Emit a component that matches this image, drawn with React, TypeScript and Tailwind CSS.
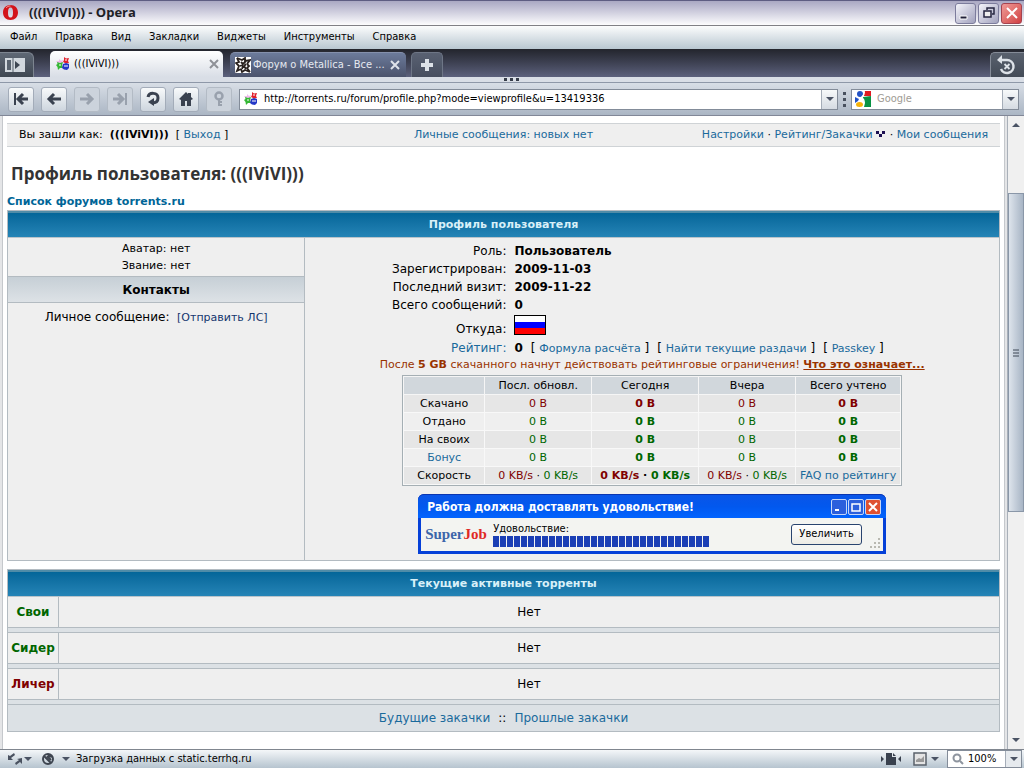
import type { ReactNode } from 'react'

const MENU = ['Файл', 'Правка', 'Вид', 'Закладки', 'Виджеты', 'Инструменты', 'Справка']

const PROFILE_ROWS = [
  { label: 'Роль:', value: 'Пользователь' },
  { label: 'Зарегистрирован:', value: '2009-11-03' },
  { label: 'Последний визит:', value: '2009-11-22' },
  { label: 'Всего сообщений:', value: '0' },
]

const STATS = [
  { label: 'Скачано', color: 'text-[#800000]' },
  { label: 'Отдано', color: 'text-[#006600]' },
  { label: 'На своих', color: 'text-[#006600]' },
  { label: 'Бонус', color: 'text-[#006600]', link: true },
]

const TORRENTS = [
  { label: 'Свои', color: 'text-[#006600]' },
  { label: 'Сидер', color: 'text-[#006600]' },
  { label: 'Личер', color: 'text-[#800000]' },
]

function Link({ children, className = 'text-[#1a6a9c]' }: { children: ReactNode; className?: string }) {
  return (
    <a href="#" className={className}>
      {children}
    </a>
  )
}

function ForumIcon() {
  return (
    <svg className="h-3.5 w-3.5 shrink-0" viewBox="0 0 14 14">
      <path d="M3 2l2 2 2-1-1 3 1 2-3-1-3 2 1-3-2-2 3-0z" fill="#f0b8ec" />
      <path d="M8 0l2 1.500L13 1l-1 3 1 2-3 .5L7 5l1-2z" fill="#e0202c" />
      <path d="M1 5l3 1 3-1-1 3 1 3-3 0-2 2-.5-3L0 8l1.500-1z" fill="#35b835" />
      <path d="M7 7l3-1 3 1v4l-2 2-3-.5L6 11z" fill="#2438c8" />
      <path d="M8 9h4M9 3h2M3 8h2" stroke="#fff" strokeWidth="1" />
    </svg>
  )
}

function MetallicaIcon() {
  return (
    <svg className="h-4 w-4 shrink-0" viewBox="0 0 16 16">
      <path d="M0 0h16v16H0z" fill="#fff" />
      <g fill="none" stroke="#29221f" strokeWidth="1.800" strokeLinejoin="miter">
        <path d="M2 1l2 4-3 1 3 3-2 5 4-2" />
        <path d="M2 1l5 2 3-2v3l5-1-3 4" />
        <path d="M15 15l-3-4 2-2-2-2M15 15l-5-2-3 2-1-3" />
        <path d="M6 5l2 2 3-3M11 7l-2 2 2 3M5 9l3-1M7 12l1-3" />
      </g>
    </svg>
  )
}

function GoogleIcon() {
  return (
    <svg className="h-4 w-4 shrink-0" viewBox="0 0 16 16">
      <path d="M0 0h16v16H0z" fill="#fff" />
      <path d="M9 0h7v5H9z" fill="#e01b22" />
      <path d="M8 6l8-1v11H9l1-4-2-3z" fill="#089243" />
      <path d="M0 6l4 2-1 2-3 2z" fill="#2352c5" />
      <ellipse cx="5" cy="3" rx="3" ry="3" fill="#2352c5" />
      <ellipse cx="4.500" cy="13.500" rx="3.500" ry="2.500" fill="#f6b30a" />
      <path d="M9 0c1 3-1 5-2 6s3 2 2 6" stroke="#fff" strokeWidth="1.500" fill="none" />
    </svg>
  )
}

function Caret({ up = false }: { up?: boolean }) {
  return (
    <svg className="h-1 w-2 shrink-0" viewBox="0 0 8 4">
      <path d={up ? 'M0 4l4-4 4 4z' : 'M0 0h8L4 4z'} fill="#4a5364" />
    </svg>
  )
}

function WindowButton({ label, close = false, children }: { label: string; close?: boolean; children: ReactNode }) {
  return (
    <button
      aria-label={label}
      className={`flex h-[21px] w-[21px] items-center justify-center rounded-[3px] border ${
        close
          ? 'border-[#a5434f] bg-gradient-to-br from-[#ee9a98] to-[#d03d42]'
          : 'border-[#7c7c9c] bg-gradient-to-br from-[#f4f4fa] to-[#a2a2bd]'
      }`}
    >
      <svg className="h-4 w-4" viewBox="0 0 16 16" fill="none">
        {children}
      </svg>
    </button>
  )
}

function TitleBar() {
  return (
    <header className="flex h-[26px] items-center border-t border-b border-t-[#5e5d82] border-b-[#808085] bg-gradient-to-b from-[#aaa8c3] to-[#fdfdfe] pr-0.5 pl-[3px]">
      <svg className="h-4 w-4" viewBox="0 0 16 16">
        <path d="M7.500 0C3 0 0 3 0 7.500S3 15 7.500 15 15 12 15 7.500 12 0 7.500 0zm0 2.500c2 0 2.500 2 2.500 5s-.5 5-2.500 5S5 10.500 5 7.500s.5-5 2.500-5z" fill="#d3131b" />
        <path d="M3 3c1-1.500 3-2 4.500-2" stroke="#f59090" strokeWidth="1" fill="none" />
      </svg>
      <h1 className="ml-2.5 flex-1 font-['Open_Sans',sans-serif] text-[13px] font-bold text-[#202025]">(((IViVI))) - Opera</h1>
      <div className="flex gap-0.5">
        <WindowButton label="Свернуть">
          <path d="M2 11h7v3H2z" fill="#202038" stroke="#fff" />
        </WindowButton>
        <WindowButton label="Восстановить">
          <path d="M6 5V3h7v6h-2" stroke="#25253f" strokeWidth="1.500" />
          <path d="M3 6h7v6H3z" stroke="#25253f" strokeWidth="1.500" fill="#eee" />
        </WindowButton>
        <WindowButton label="Закрыть" close>
          <path d="M3 3l10 10M13 3L3 13" stroke="#fff" strokeWidth="2" />
        </WindowButton>
      </div>
    </header>
  )
}

function MenuBar() {
  return (
    <nav className="flex h-[23px] items-center gap-[18px] bg-gradient-to-b from-[#fcfdfd] to-[#b9c7d1] pl-2.5">
      {MENU.map((item) => (
        <button key={item}>{item}</button>
      ))}
    </nav>
  )
}

function TabBar() {
  return (
    <div className="flex h-7 items-end bg-gradient-to-b from-[#23252d] to-[#5c617d]">
      <button
        aria-label="Панели"
        className="flex h-[25px] w-[34px] items-center rounded-tr-md border-t border-r border-[#7d8590] bg-gradient-to-b from-[#5f6875] to-[#3f4752] pl-[5px]"
      >
        <svg className="h-4 w-5" viewBox="0 0 20 16">
          <path d="M0 1h20v14H0z" fill="#d2d8de" />
          <path d="M2 3h4v10H2z" fill="#59636f" />
          <path d="M8 1v14" stroke="#59636f" />
          <path d="M10 4l5 4-5 4z" fill="#3d4652" />
        </svg>
      </button>
      <div className="ml-4 flex h-[26px] w-[173px] items-center rounded-t-[5px] bg-gradient-to-b from-white to-[#d9dee6] pr-1 pl-1.5">
        <ForumIcon />
        <span className="ml-1 flex-1">(((IViVI)))</span>
        <button aria-label="Закрыть вкладку">
          <svg className="h-2.5 w-2.5" viewBox="0 0 10 10">
            <path d="M1 1l8 8M9 1L1 9" stroke="#8f9197" strokeWidth="2" />
          </svg>
        </button>
      </div>
      <div className="ml-[7px] flex h-[25px] w-[176px] items-center rounded-t-[5px] border-t border-[#8490ac] bg-gradient-to-b from-[#6c7b9b] to-[#4b536c] pr-1.5 pl-[5px] text-[#e6e9f0]">
        <MetallicaIcon />
        <span className="ml-0.5 flex-1 whitespace-nowrap">Форум о Metallica - Все ...</span>
        <button aria-label="Закрыть вкладку">
          <svg className="h-2.5 w-2.5" viewBox="0 0 10 10">
            <path d="M1 1l8 8M9 1L1 9" stroke="#dfe3ea" strokeWidth="2" />
          </svg>
        </button>
      </div>
      <button
        aria-label="Новая вкладка"
        className="ml-[5px] flex h-[25px] w-8 items-center justify-center rounded-t-[5px] border border-b-0 border-[#6e7686] bg-gradient-to-b from-[#596172] to-[#474e5f]"
      >
        <svg className="h-3 w-3" viewBox="0 0 12 12">
          <path d="M4 0h4v4h4v4H8v4H4V8H0V4h4z" fill="#dde2e8" />
        </svg>
      </button>
      <button
        aria-label="Закрытые вкладки"
        className="ml-auto flex h-[25px] w-[34px] items-center rounded-tl-[5px] border-t border-l border-[#858c98] bg-gradient-to-b from-[#59616e] to-[#434b57] pl-1.5"
      >
        <svg className="h-5 w-5" viewBox="0 0 20 20" fill="none">
          <path d="M4 5h6a6.500 6.500 0 1 1-6 9" stroke="#dde2e8" strokeWidth="2.500" />
          <path d="M0 5l5-5v9z" fill="#dde2e8" />
          <path d="M7.500 9l5 5M12.500 9l-5 5" stroke="#dde2e8" strokeWidth="1.800" />
        </svg>
      </button>
    </div>
  )
}

function ToolButton({ label, disabled = false, children }: { label: string; disabled?: boolean; children: ReactNode }) {
  return (
    <button
      aria-label={label}
      disabled={disabled}
      className={`flex h-[25px] w-[26px] items-center justify-center rounded-[3px] border ${
        disabled
          ? 'border-[#b3bbc5] bg-[#ccd3dc] text-[#99a1ad]'
          : 'border-[#a3acb9] bg-gradient-to-b from-[#f8fafb] to-[#cdd5de] text-[#3a4250]'
      }`}
    >
      <svg className="h-4 w-4" viewBox="0 0 16 16" fill="none" stroke="currentColor" strokeWidth="3">
        {children}
      </svg>
    </button>
  )
}

function Toolbar() {
  return (
    <div className="flex h-[34px] items-center border-t border-b border-t-[#8e98a8] border-b-[#818797] bg-gradient-to-b from-[#d8dee6] to-[#abb6c4] pr-[5px] pl-2">
      <div className="flex gap-[7px]">
        <ToolButton label="В начало">
          <path d="M2 2v12" strokeWidth="2" />
          <path d="M15 8H6M10 3L5 8l5 5" />
        </ToolButton>
        <ToolButton label="Назад">
          <path d="M15 8H3M8 3L3 8l5 5" />
        </ToolButton>
        <ToolButton label="Вперёд" disabled>
          <path d="M1 8h12M8 3l5 5-5 5" />
        </ToolButton>
        <ToolButton label="В конец" disabled>
          <path d="M14 2v12" strokeWidth="2" />
          <path d="M1 8h9M6 3l5 5-5 5" />
        </ToolButton>
        <ToolButton label="Обновить">
          <path d="M3 6c1-5 10-5 10 1 0 4-3 5-6 5" />
          <path d="M3 11l6-4v8z" fill="currentColor" stroke="none" />
        </ToolButton>
        <ToolButton label="Домой">
          <path d="M1 8l7-7 2 2V2h3v4l2 2-2 1v6H9v-5H7v5H3V9z" fill="currentColor" stroke="none" />
        </ToolButton>
        <ToolButton label="Пароли" disabled>
          <circle cx="8" cy="5" r="3.500" strokeWidth="2.500" />
          <path d="M8 8v7M8 11h3M8 14h3" strokeWidth="2" />
        </ToolButton>
      </div>
      <div className="ml-[7px] flex h-[21px] flex-1 items-center border border-[#838c99] bg-white pl-1">
        <ForumIcon />
        <input
          aria-label="Адрес"
          defaultValue="http://torrents.ru/forum/profile.php?mode=viewprofile&u=13419336"
          className="ml-1.5 min-w-0 flex-1 outline-none"
        />
        <button aria-label="История адресов" className="flex h-full w-4 items-center justify-center border-l border-[#a5adb8] bg-gradient-to-b from-[#f7f9fa] to-[#d5dbe2]">
          <Caret />
        </button>
      </div>
      <svg className="mx-1 h-4 w-[5px]" viewBox="0 0 5 16" fill="#48505e">
        <path d="M1 1h3v3H1zM1 7h3v3H1zM1 13h3v3H1z" />
      </svg>
      <div className="flex h-[21px] w-[168px] items-center border border-[#838c99] bg-white pl-[3px]">
        <GoogleIcon />
        <input aria-label="Поиск" placeholder="Google" className="ml-1.5 min-w-0 flex-1 outline-none placeholder:text-[#a09b94]" />
        <button aria-label="Поисковые системы" className="flex h-full w-4 items-center justify-center border-l border-[#a5adb8] bg-gradient-to-b from-[#f7f9fa] to-[#d5dbe2]">
          <Caret />
        </button>
      </div>
    </div>
  )
}

function TableHead({ children }: { children: ReactNode }) {
  return (
    <h3 className="flex h-[27px] items-center justify-center border-t-2 border-b border-t-[#4f8ca8] border-b-[#b9c4cb] bg-gradient-to-b from-[#036699] to-[#2484b6] text-[11px] font-bold text-[#d8f0f8]">
      {children}
    </h3>
  )
}

function StatsTable() {
  return (
    <div className="w-[500px] border border-[#a5afb4]">
      <table className="w-full table-fixed border-collapse text-center text-[11px] leading-[17px]">
        <colgroup>
          <col className="w-[81px]" />
          <col className="w-[107px]" />
          <col className="w-[107px]" />
          <col className="w-[97px]" />
          <col />
        </colgroup>
        <thead>
          <tr className="bg-[#d1d7dc]">
            <td className="border border-[#f5f5f5]" />
            {['Посл. обновл.', 'Сегодня', 'Вчера', 'Всего учтено'].map((h) => (
              <th key={h} className="border border-[#f5f5f5] font-normal">
                {h}
              </th>
            ))}
          </tr>
        </thead>
        <tbody>
          {STATS.map((row, i) => (
            <tr key={row.label} className={i % 2 ? 'bg-[#efefef]' : 'bg-[#e6e6e6]'}>
              <td className="border border-[#f8f8f8]">{row.link ? <Link>{row.label}</Link> : row.label}</td>
              <td className={`border border-[#f8f8f8] ${row.color}`}>0 B</td>
              <td className={`border border-[#f8f8f8] font-bold ${row.color}`}>0 B</td>
              <td className={`border border-[#f8f8f8] ${row.color}`}>0 B</td>
              <td className={`border border-[#f8f8f8] font-bold ${row.color}`}>0 B</td>
            </tr>
          ))}
          <tr className="bg-[#e6e6e6] whitespace-nowrap">
            <td className="border border-[#f8f8f8]">Скорость</td>
            {['', 'font-bold', ''].map((weight, i) => (
              <td key={i} className={`border border-[#f8f8f8] ${weight}`}>
                <span className="text-[#800000]">0 KB/s</span> · <span className="text-[#006600]">0 KB/s</span>
              </td>
            ))}
            <td className="border border-[#f8f8f8]">
              <Link>FAQ по рейтингу</Link>
            </td>
          </tr>
        </tbody>
      </table>
    </div>
  )
}

function BannerButton({ label, color, children }: { label: string; color: string; children: ReactNode }) {
  return (
    <button aria-label={label} className={`flex h-4 w-4 items-center justify-center rounded-[2px] border border-[#c5d6f8] ${color}`}>
      <svg className="h-3 w-3" viewBox="0 0 12 12" fill="none" stroke="#fff" strokeWidth="2">
        {children}
      </svg>
    </button>
  )
}

function Banner() {
  return (
    <div className="w-[468px] rounded-t-md bg-[#0540d8] px-[3px] pb-[3px] font-['DejaVu_Sans_Condensed','DejaVu_Sans',sans-serif] text-[11px]">
      <div className="-mx-[3px] flex h-6 items-center gap-px rounded-t-md border-t border-[#0a35b0] bg-gradient-to-b from-[#0a55e8] via-[#0258ee] to-[#0264ff] pr-[5px] pl-[9px]">
        <span className="flex-1 text-[12px] font-bold text-white">Работа должна доставлять удовольствие!</span>
        <BannerButton label="Свернуть" color="bg-[#2b5fdc]">
          <path d="M2 9h4" />
        </BannerButton>
        <BannerButton label="Развернуть" color="bg-[#2b5fdc]">
          <path d="M2 3h8v7H2z" strokeWidth="1.500" />
        </BannerButton>
        <BannerButton label="Закрыть" color="bg-[#df5030]">
          <path d="M2 2l8 8M10 2l-8 8" />
        </BannerButton>
      </div>
      <div className="flex h-[33px] items-center bg-[#f3f4f1] pl-1">
        <span className="w-[68px] font-['Liberation_Serif',serif] text-[15px] font-bold text-[#3c66aa]">
          Super<span className="text-[#df2a24]">Job</span>
        </span>
        <div className="flex-1">
          <div className="leading-[14px]">Удовольствие:</div>
          <div role="progressbar" aria-label="Удовольствие" className="flex h-[11px] gap-px">
            {Array.from({ length: 31 }, (_, i) => (
              <span key={i} className="w-1.5 bg-[#1b3fb5]" />
            ))}
          </div>
        </div>
        <button className="h-[21px] w-[71px] rounded-[3px] border border-[#29446f] bg-gradient-to-b from-white to-[#ecebe5]">Увеличить</button>
        <svg className="mr-px mb-px ml-2 h-3 w-3 self-end" viewBox="0 0 12 12" fill="#b9b9b1">
          <path d="M8 0h2v2H8zM4 4h2v2H4zM8 4h2v2H8zM0 8h2v2H0zM4 8h2v2H4zM8 8h2v2H8z" />
        </svg>
      </div>
    </div>
  )
}

function Profile() {
  return (
    <section className="border border-[#b3bbc1] bg-[#efefef]">
      <TableHead>Профиль пользователя</TableHead>
      <div className="flex h-[322px]">
        <aside className="w-[30%] border-r border-[#b3bbc1] text-center">
          <div className="py-0.5 text-[11px] leading-[17px]">
            <div>Аватар: нет</div>
            <div>Звание: нет</div>
          </div>
          <h4 className="flex h-[27px] items-center justify-center border-t border-b border-[#b3bbc1] bg-gradient-to-b from-[#c6cfd6] to-[#dde2e6] text-[12px] font-bold">
            Контакты
          </h4>
          <div className="mt-[5px] leading-[18px]">
            Личное сообщение:&nbsp; <Link className="text-[11px] text-[#14366e]">[Отправить ЛС]</Link>
          </div>
        </aside>
        <div className="flex flex-1 flex-col items-center pt-1">
          <dl className="grid w-full grid-cols-[29%_1fr] gap-x-2 leading-[18px] whitespace-nowrap">
            {PROFILE_ROWS.map((row) => (
              <div key={row.label} className="contents">
                <dt className="text-right">{row.label}</dt>
                <dd className="font-bold">{row.value}</dd>
              </div>
            ))}
            <dt className="flex items-end justify-end pb-px">Откуда:</dt>
            <dd className="h-[25px] pt-px">
              <svg className="h-5 w-8" viewBox="0 0 32 20" role="img" aria-label="Россия">
                <path d="M0 0h32v20H0z" fill="#000" />
                <path d="M1 1h30v6H1z" fill="#fff" />
                <path d="M1 7h30v6H1z" fill="#00f" />
                <path d="M1 13h30v6H1z" fill="#f00" />
              </svg>
            </dd>
            <dt className="text-right">
              <Link>Рейтинг:</Link>
            </dt>
            <dd className="flex gap-2">
              <b>0</b>
              <span>
                [ <Link className="text-[11px] text-[#1a6a9c]">Формула расчёта</Link> ]
              </span>
              <span>
                [ <Link className="text-[11px] text-[#1a6a9c]">Найти текущие раздачи</Link> ]
              </span>
              <span>
                [ <Link className="text-[11px] text-[#1a6a9c]">Passkey</Link> ]
              </span>
            </dd>
          </dl>
          <p className="mb-[3px] text-[11px] leading-[14px] whitespace-nowrap text-[#993300]">
            После <b>5 GB</b> скачанного начнут действовать рейтинговые ограничения!{' '}
            <Link className="font-bold underline">Что это означает...</Link>
          </p>
          <StatsTable />
          <div className="mt-2">
            <Banner />
          </div>
        </div>
      </div>
    </section>
  )
}

function ActiveTorrents() {
  return (
    <section className="mt-2 border border-[#b3bbc1] bg-[#dce1e5]">
      <TableHead>Текущие активные торренты</TableHead>
      {TORRENTS.map((row, i) => (
        <div
          key={row.label}
          className={`mb-1 flex items-stretch border-b border-[#b3bbc1] bg-[#efefef] ${i === 0 ? 'h-[31px]' : 'h-8 border-t'}`}
        >
          <b className={`flex w-[51px] items-center justify-center border-r border-[#b3bbc1] ${row.color}`}>{row.label}</b>
          <span className="flex flex-1 items-center justify-center">Нет</span>
        </div>
      ))}
      <div className="flex h-[27px] items-center justify-center gap-2 border-t border-[#b3bbc1]">
        <Link>Будущие закачки</Link>
        <span>::</span>
        <Link>Прошлые закачки</Link>
      </div>
    </section>
  )
}

function Page() {
  return (
    <main className="min-w-0 flex-1 border-r border-l border-[#c5c8cc] bg-white px-1 pt-[7px] font-['DejaVu_Sans',sans-serif] text-[12px] text-black">
      <div className="grid h-6 grid-cols-[1fr_auto_1fr] items-center border-t border-b border-[#cfd3d6] bg-[#efefef] px-3 text-[11px] whitespace-nowrap">
        <div>
          Вы зашли как:&nbsp; <b>(((IViVI)))</b>&nbsp; [ <Link>Выход</Link> ]
        </div>
        <Link>Личные сообщения: новых нет</Link>
        <div className="text-right">
          <Link>Настройки</Link> · <Link>Рейтинг/Закачки</Link>{' '}
          <svg className="inline h-2 w-2.5" viewBox="0 0 10 8" fill="#1c0f52">
            <path d="M0 0h3v3H0zM6 0h3v3H6zM3 3h3v3H3z" />
          </svg>{' '}
          · <Link>Мои сообщения</Link>
        </div>
      </div>
      <h2 className="mt-[15px] ml-1 font-['Open_Sans',sans-serif] text-[17px] leading-6 font-bold text-[#333]">
        Профиль пользователя: (((IViVI)))
      </h2>
      <div className="mt-2 text-[11px] leading-4 font-bold">
        <Link className="text-[#006597]">Список форумов torrents.ru</Link>
      </div>
      <Profile />
      <ActiveTorrents />
    </main>
  )
}

function Scrollbar() {
  return (
    <div className="flex w-[17px] flex-col items-center border-l border-[#a9b0b9] bg-[#f0f0f0]">
      <button aria-label="Вверх" className="flex h-[18px] items-center">
        <Caret up />
      </button>
      <div className="mt-[59px] flex h-[319px] w-full items-center justify-center border border-[#8a97a8] bg-gradient-to-r from-[#dde4ec] to-[#a8b5c5]">
        <svg className="h-2 w-2" viewBox="0 0 8 8" stroke="#3f4856">
          <path d="M1 1h6M1 4h6M1 7h6" />
        </svg>
      </div>
      <button aria-label="Вниз" className="mt-auto flex h-[18px] items-center">
        <Caret />
      </button>
    </div>
  )
}

function StatusBar() {
  return (
    <footer className="flex h-[19px] items-center border-t border-[#80868f] bg-gradient-to-b from-[#f4f7f9] to-[#b6c4cf] pr-0.5 pl-2">
      <svg className="h-3 w-3.5" viewBox="0 0 14 12" fill="#4a5260">
        <path d="M0 7V2l2 1 4-3 1 2-4 3 2 2zM14 5v6l-2-2-4 3-1-2 4-3-2-1z" />
      </svg>
      <span className="ml-0.5 flex">
        <Caret />
      </span>
      <svg className="ml-2.5 h-3 w-3" viewBox="0 0 12 12">
        <circle cx="6" cy="6" r="5" fill="none" stroke="#3e4550" strokeWidth="2" />
        <path d="M2 3l7 7M5 3l4 4M6 2l4 2" stroke="#3e4550" strokeWidth="2" />
      </svg>
      <span className="ml-2 flex">
        <Caret />
      </span>
      <span className="ml-1.5 flex-1">Загрузка данных с static.terrhq.ru</span>
      <svg className="h-3 w-5" viewBox="0 0 20 12" fill="#39414e">
        <path d="M0 3l3 3-3 3zM20 3l-3 3 3 3zM5 0h6v4h4v8H5zM12 0l3 3h-3z" />
      </svg>
      <svg className="mr-1 ml-3 h-3.5 w-3.5" viewBox="0 0 14 14">
        <path d="M1 1h12v12H1z" fill="#e4e4e4" stroke="#5a616b" strokeWidth="1.500" />
        <path d="M3 8l3-2 2 1 3-3v6H3z" fill="#999" />
      </svg>
      <Caret />
      <div className="ml-2 flex h-[18px] w-[75px] items-center border border-[#838c99] bg-white pl-1">
        <svg className="h-3 w-3 shrink-0" viewBox="0 0 12 12" fill="none" stroke="#8d949e" strokeWidth="2">
          <circle cx="5" cy="5" r="3.500" />
          <path d="M8 8l3 3" />
        </svg>
        <input aria-label="Масштаб" defaultValue="100%" className="ml-1 min-w-0 flex-1 outline-none" />
        <button aria-label="Выбрать масштаб" className="flex h-full w-4 shrink-0 items-center justify-center border-l border-[#a5adb8] bg-[#e6eaee]">
          <Caret />
        </button>
      </div>
    </footer>
  )
}

export default function App() {
  return (
    <div className="flex min-h-screen flex-col bg-[#e4e5e7] font-['DejaVu_Sans_Condensed','DejaVu_Sans',sans-serif] text-[11px] text-black">
      <TitleBar />
      <MenuBar />
      <TabBar />
      <div className="flex h-[5px] items-center justify-center bg-[#d9dee6]">
        <svg className="h-[3px] w-4" viewBox="0 0 16 3" fill="#363d49">
          <path d="M0 0h3v3H0zM6 0h3v3H6zM12 0h3v3h-3z" />
        </svg>
      </div>
      <Toolbar />
      <div className="flex flex-1 pl-0.5">
        <Page />
        <div className="w-0.5" />
        <Scrollbar />
      </div>
      <StatusBar />
    </div>
  )
}
